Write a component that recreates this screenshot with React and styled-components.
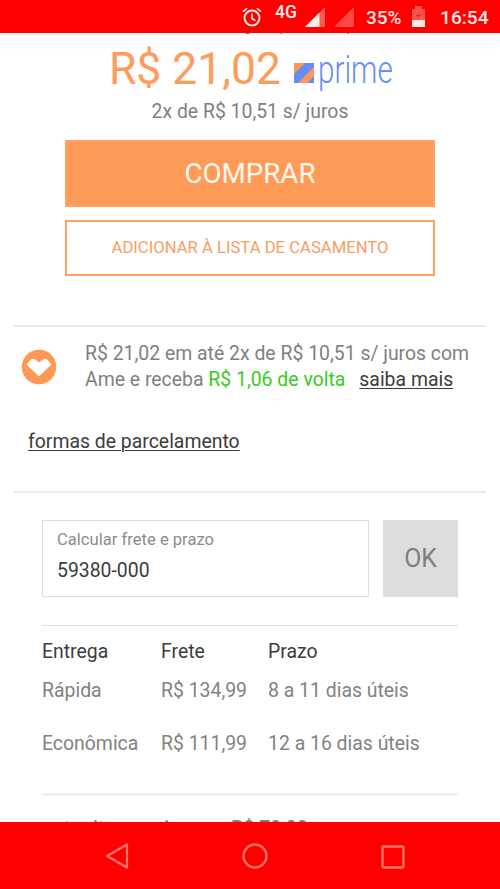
import styled, { createGlobalStyle } from 'styled-components';

const GlobalStyle = createGlobalStyle`
	* {
		box-sizing: border-box;
	}

	body {
		margin: 0;
		background: #fff;
		font-family: Roboto, 'Liberation Sans', sans-serif;
	}

	button,
	input {
		font-family: inherit;
		border-radius: 0;
	}
`;

const Screen = styled.div`
	width: 500px;
	height: 889px;
	display: flex;
	flex-direction: column;
	overflow: hidden;
	color: #7f7f7f;
`;

const StatusBar = styled.header`
	flex: none;
	height: 33px;
	display: flex;
	align-items: center;
	justify-content: flex-end;
	padding-right: 12px;
	background: #f00;
	color: #ffe9e5;

	svg {
		display: block;
		flex: none;
	}
`;

const StatusText = styled.span`
	font-size: ${(props) => props.$size || 19}px;
	line-height: 22px;
	font-weight: 500;
	white-space: nowrap;
	width: ${(props) => props.$width}px;
	margin-left: ${(props) => props.$gap}px;
	margin-top: ${(props) => props.$top || 0}px;
`;

const StatusIcon = styled.svg`
	margin-left: ${(props) => props.$gap || 0}px;
`;

const Content = styled.main`
	flex: 1;
	min-height: 0;
	overflow: hidden;
	display: flex;
	flex-direction: column;
`;

const Seller = styled.p`
	flex: none;
	height: 20px;
	margin: -19px 0 0;
	padding-right: 33px;
	font-size: 19.4px;
	line-height: 20px;
	text-align: center;
`;

const PriceRow = styled.div`
	flex: none;
	height: 67px;
	display: flex;
	padding-left: 109px;
`;

const Price = styled.strong`
	width: 185px;
	font-size: 44.4px;
	line-height: 70px;
	font-weight: 400;
	white-space: nowrap;
	color: #ff9b5b;
`;

const Installments = styled.p`
	flex: none;
	margin: 0;
	height: 39px;
	font-size: 19.4px;
	line-height: 22px;
	text-align: center;
`;

const Actions = styled.div`
	flex: none;
	display: flex;
	flex-direction: column;
	gap: 13px;
	padding: 0 65px 49px;
`;

const ActionButton = styled.button`
	height: ${(props) => props.$outline ? 56 : 67}px;
	padding: 0 0 ${(props) => props.$outline ? 1 : 0}px;
	border: 2px solid #ffa064;
	background: ${(props) => props.$outline ? '#fff' : '#ff9b59'};
	color: ${(props) => props.$outline ? '#f99d62' : '#fff8ee'};
	font-size: ${(props) => props.$outline ? 16.66 : 27.7}px;
`;

const Payment = styled.section`
	flex: none;
	height: 168px;
	margin: 0 14px;
	border-top: 2px solid #ebebeb;
	border-bottom: 2px solid #ebebeb;
`;

const AmeRow = styled.div`
	display: flex;
	padding: 14px 0 0 7px;
`;

const AmeIcon = styled.svg`
	flex: none;
	margin: 8px 28px 0 0;
`;

const AmeText = styled.p`
	margin: 0;
	font-size: 19.42px;
	line-height: 26px;
	white-space: nowrap;
`;

const Cashback = styled.span`
	color: #36cd20;
	margin-right: 14px;
`;

const Link = styled.a`
	color: #3c3c3c;
	text-decoration: underline;
	text-decoration-thickness: 1px;
	text-underline-offset: 2px;
	text-decoration-skip-ink: ${(props) => props.$skip ? 'auto' : 'none'};
`;

const PaymentMethods = styled.p`
	margin: 36px 0 0 14px;
	font-size: 19.42px;
	line-height: 26px;
`;

const Shipping = styled.section`
	flex: none;
	margin: 0 42px;
	padding-top: 27px;
`;

const ZipForm = styled.form`
	display: flex;
	gap: 14px;
	height: 77px;
`;

const ZipField = styled.label`
	width: 328px;
	display: flex;
	flex-direction: column;
	padding: 7px 15px 0 14px;
	border: 1px solid #dedede;
	font-size: 16.6px;
	line-height: 24px;
	color: #8c8c8c;
`;

const ZipInput = styled.input`
	height: 26px;
	margin-top: 5px;
	padding: 0;
	border: 0;
	outline: 0;
	font-size: 19.4px;
	color: #3c3c3c;
`;

const OkButton = styled.button`
	width: 75px;
	border: 0;
	padding: 0 0 1px;
	background: #ddd;
	color: #7d7d7d;
	font-size: 24.9px;
`;

const Table = styled.div`
	margin-top: 28px;
	padding-top: 6px;
	height: 171px;
	border-top: 1px solid #e0e0e0;
	border-bottom: 3px solid #f2f2f2;
`;

const Row = styled.div`
	display: grid;
	grid-template-columns: 119px 107px 1fr;
	height: ${(props) => props.$head ? 39 : 53}px;
	font-size: 19.42px;
	line-height: 40px;
	white-space: nowrap;
	color: ${(props) => props.$head ? '#3c3c3c' : '#828282'};
`;

const OtherOffer = styled.p`
	display: grid;
	grid-template-columns: 189px 1fr;
	margin: 20px 0 0;
	font-size: 19.5px;
	line-height: 26px;
	font-weight: 500;
	white-space: nowrap;
`;

const NavBar = styled.nav`
	flex: none;
	height: 67px;
	display: flex;
	align-items: center;
	justify-content: space-between;
	padding: 0 94px 0 104px;
	background: #f00;

	svg {
		display: block;
		fill: none;
		stroke: #ff7468;
		stroke-width: 2.3;
	}
`;

const PrimeMark = styled.div`
	display: flex;
	align-items: flex-start;

	svg {
		margin-top: 29px;
	}
`;

const PrimeName = styled.span`
	display: block;
	width: 76px;
	margin-left: 4px;
	color: #668ff3;
	font-size: 38.5px;
	font-weight: 300;
	line-height: 72px;
	transform: scaleX(0.77);
	transform-origin: left;
`;

const deliveries = [
	{ name: 'Rápida', price: 'R$ 134,99', time: '8 a 11 dias úteis' },
	{ name: 'Econômica', price: 'R$ 111,99', time: '12 a 16 dias úteis' },
];

const PhoneStatus = () => (
	<StatusBar>
		<StatusIcon width="20" height="20" viewBox="0 0 20 20" fill="none" stroke="currentColor" strokeWidth="2">
			<circle cx="10" cy="11" r="7.5" />
			<path d="M10 6.5v5l3.3 2.1M1 4.7 5 1.3M15 1.3l4 3.4" strokeWidth="1.7" />
		</StatusIcon>
		<StatusText $size={17.5} $width={24} $gap={13} $top={-9}>4G</StatusText>
		<StatusIcon $gap={6} width="20" height="20" viewBox="0 0 20 20">
			<path d="M0 20 20 0v20z" fill="#ff5a50" />
			<path d="M0 20 14.5 5.5V20z" fill="currentColor" />
		</StatusIcon>
		<StatusIcon $gap={9} width="20" height="20" viewBox="0 0 20 20">
			<path d="M0 20 20 0v20z" fill="#ff4a42" />
		</StatusIcon>
		<StatusText $width={37} $gap={12} $size={19} $top={2}>35%</StatusText>
		<StatusIcon $gap={9} width="13" height="21" viewBox="0 0 13 21">
			<path d="M0 3h3V0h7v3h3v11H0z" fill="#ff514a" />
			<path d="M0 14h13v7H0z" fill="currentColor" />
			<path d="M6.500 7v5M4 9.500h5" stroke="#c33" strokeWidth="1" />
		</StatusIcon>
		<StatusText $width={48} $gap={15} $size={19.2} $top={2}>16:54</StatusText>
	</StatusBar>
);

const Prime = () => (
	<PrimeMark>
		<svg width="20" height="20" viewBox="0 0 20 20">
			<path d="M0 0h20v20H0z" fill="#628df5" />
			<path d="M0 0h11L0 11zM20 4v9l-7 7H4z" fill="#ff9659" />
		</svg>
		<PrimeName>prime</PrimeName>
	</PrimeMark>
);

const App = () => (
	<>
		<GlobalStyle />
		<Screen>
			<PhoneStatus />
			<Content>
				<Seller>vendido e entregue por Shop</Seller>
				<PriceRow>
					<Price>R$ 21,02</Price>
					<Prime />
				</PriceRow>
				<Installments>2x de R$ 10,51 s/ juros</Installments>
				<Actions>
					<ActionButton>COMPRAR</ActionButton>
					<ActionButton $outline>ADICIONAR À LISTA DE CASAMENTO</ActionButton>
				</Actions>
				<Payment>
					<AmeRow>
						<AmeIcon width="36" height="36" viewBox="0 0 36 36">
							<circle cx="18" cy="18" r="17.3" fill="#ff9855" />
							<path d="m6 15.5 4.500-5h3l4.500 3.500 4.500-3.500h3l4.500 5L18 27z" fill="#fff" stroke="#fff" strokeLinejoin="round" />
						</AmeIcon>
						<AmeText>
							R$ 21,02 em até 2x de R$ 10,51 s/ juros com
							<br />
							Ame e receba <Cashback>R$ 1,06 de volta</Cashback>
							<Link>saiba mais</Link>
						</AmeText>
					</AmeRow>
					<PaymentMethods>
						<Link $skip>formas de parcelamento</Link>
					</PaymentMethods>
				</Payment>
				<Shipping>
					<ZipForm>
						<ZipField>
							Calcular frete e prazo
							<ZipInput defaultValue="59380-000" />
						</ZipField>
						<OkButton type="button">OK</OkButton>
					</ZipForm>
					<Table>
						<Row $head>
							<span>Entrega</span>
							<span>Frete</span>
							<span>Prazo</span>
						</Row>
						{deliveries.map((delivery) => (
							<Row key={delivery.name}>
								<span>{delivery.name}</span>
								<span>{delivery.price}</span>
								<span>{delivery.time}</span>
							</Row>
						))}
					</Table>
					<OtherOffer>
						<span>outro item mais caro</span>
						<span>R$ 79,90</span>
					</OtherOffer>
				</Shipping>
			</Content>
			<NavBar>
				<svg width="26" height="26" viewBox="0 0 26 26">
					<path d="M23 1.5v23L3 13z" strokeLinejoin="round" />
				</svg>
				<svg width="26" height="26" viewBox="0 0 26 26">
					<circle cx="13" cy="13" r="11.5" />
				</svg>
				<svg width="26" height="26" viewBox="0 0 26 26">
					<rect x="2.500" y="3.500" width="21" height="21" rx="1" />
				</svg>
			</NavBar>
		</Screen>
	</>
);

export default App;
